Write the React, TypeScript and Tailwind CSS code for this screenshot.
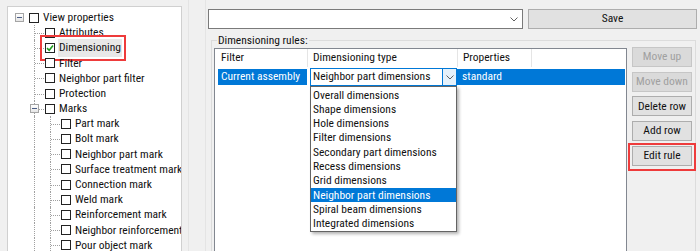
import React from 'react'

interface Node {
  label: string
  level: number
  exp?: boolean
  checked?: boolean
  marked?: boolean
}

const tree: Node[] = [
  { label: 'View properties', level: 0, exp: true },
  { label: 'Attributes', level: 1 },
  { label: 'Dimensioning', level: 1, checked: true, marked: true },
  { label: 'Filter', level: 1 },
  { label: 'Neighbor part filter', level: 1 },
  { label: 'Protection', level: 1 },
  { label: 'Marks', level: 1, exp: true },
  { label: 'Part mark', level: 2 },
  { label: 'Bolt mark', level: 2 },
  { label: 'Neighbor part mark', level: 2 },
  { label: 'Surface treatment mark', level: 2 },
  { label: 'Connection mark', level: 2 },
  { label: 'Weld mark', level: 2 },
  { label: 'Reinforcement mark', level: 2 },
  { label: 'Neighbor reinforcement mark', level: 2 },
  { label: 'Pour object mark', level: 2 },
]

const dimTypes = [
  'Overall dimensions',
  'Shape dimensions',
  'Hole dimensions',
  'Filter dimensions',
  'Secondary part dimensions',
  'Recess dimensions',
  'Grid dimensions',
  'Neighbor part dimensions',
  'Spiral beam dimensions',
  'Integrated dimensions',
]

function Expander() {
  return (
    <span className="w-[9px] h-[9px] border border-[#a5a5a5] bg-gradient-to-b from-white to-[#e6e6e6] flex items-center justify-center">
      <span className="w-[5px] h-[1px] bg-[#4b5d85]" />
    </span>
  )
}

function Check({ checked }: { checked?: boolean }) {
  return (
    <span className="w-[10px] h-[10px] shrink-0 border border-[#222] bg-white flex items-center justify-center">
      {checked && (
        <svg width="8" height="8" viewBox="0 0 8 8">
          <path d="M1 4.2 L3.2 6.3 L7 1.6" fill="none" stroke="#1e9e1e" strokeWidth="1.6" />
        </svg>
      )}
    </span>
  )
}

function Chevron() {
  return (
    <svg width="8" height="5" viewBox="0 0 8 5">
      <path d="M0.5 0.5 L4 4 L7.5 0.5" fill="none" stroke="#606060" strokeWidth="1" />
    </svg>
  )
}

function TreeRow({ node }: { node: Node }) {
  return (
    <div className="flex items-center h-[15.2px] whitespace-nowrap">
      <span className="w-[21px] h-full shrink-0 flex items-center">
        {node.level === 0 && (
          <span className="ml-[7px]">
            <Expander />
          </span>
        )}
      </span>
      {node.level >= 2 && (
        <span className="w-[16px] h-full shrink-0 pl-[5px]">
          <span className="block h-full border-l border-dotted border-[#a0a0a0]" />
        </span>
      )}
      {node.level >= 1 && (
        <span className="relative w-[16px] h-full shrink-0">
          <span className="absolute left-[5px] top-0 bottom-0 border-l border-dotted border-[#a0a0a0]" />
          <span className="absolute left-[6px] right-[1px] top-1/2 border-t border-dotted border-[#a0a0a0]" />
          {node.exp && (
            <span className="absolute left-[1px] top-[3px]">
              <Expander />
            </span>
          )}
        </span>
      )}
      <span className="relative flex items-center">
        <Check checked={node.checked} />
        <span className={'ml-[3px] px-[1px] ' + (node.marked ? 'bg-[#e8e8e8]' : '')}>{node.label}</span>
        {node.marked && (
          <span className="absolute -left-[5px] -right-[4px] -top-[4px] -bottom-[4px] border-2 border-[#ee3b3b]" />
        )}
      </span>
    </div>
  )
}

function SideButton({ label, disabled, marked }: { label: string; disabled?: boolean; marked?: boolean }) {
  return (
    <div className="relative h-[20px]">
      <div
        className={
          'h-full border flex items-center justify-center whitespace-nowrap ' +
          (disabled ? 'bg-[#dadada] border-[#c6c6c6] text-[#a0a0a0]' : 'bg-[#e1e1e1] border-[#adadad] text-[#111]')
        }
      >
        {label}
      </div>
      {marked && <span className="absolute -left-[4px] -right-[4px] -top-[3px] -bottom-[5px] border-2 border-[#ee3b3b]" />}
    </div>
  )
}

export default function App() {
  return (
    <div className="w-[700px] h-[251px] overflow-hidden bg-[#f0f0f0] flex font-['Roboto_Condensed','Liberation_Sans_Narrow',sans-serif] text-[11.5px] text-[#111]">
      {/* Tree panel */}
      <div className="pl-[7px] pt-[6px] shrink-0">
        <div className="w-[175px] h-[260px] bg-white border border-[#d0d0d0] pt-[3px] overflow-hidden">
          {tree.map(n => (
            <TreeRow key={n.label} node={n} />
          ))}
        </div>
      </div>

      {/* Splitter */}
      <div className="ml-[6px] w-[18px] h-full shrink-0 border-x border-[#e4e4e4]" />

      {/* Right side */}
      <div className="flex-1 ml-[2px] pt-[9px]">
        <div className="flex gap-[5px] h-[20px] mr-[3px]">
          <div className="w-[315px] bg-white border border-[#7a7a7a] flex items-center justify-end pr-[4px]">
            <Chevron />
          </div>
          <div className="flex-1 bg-[#e1e1e1] border border-[#adadad] flex items-center justify-center">Save</div>
        </div>

        <fieldset className="mt-[3px] ml-[3px] mr-[4px] h-[240px] border border-[#dcdcdc] pl-[2px]">
          <legend className="ml-[3px] px-[1px] leading-[16px]">Dimensioning rules:</legend>
          <div className="flex gap-[5px]">
            <div className="relative w-[413px] h-[220px] bg-white border border-[#828790] shrink-0">
              <div className="flex h-[18px] items-stretch">
                <div className="w-[93px] pl-[6px] border-r border-[#e5e5e5] flex items-center">Filter</div>
                <div className="w-[150px] pl-[5px] border-r border-[#e5e5e5] flex items-center">Dimensioning type</div>
                <div className="w-[74px] pl-[5px] border-r border-[#e5e5e5] flex items-center">Properties</div>
                <div className="flex-1" />
              </div>
              <div className="flex h-[18px] mt-[1px]">
                <div className="w-[95px] pl-[3px] pr-[3px] py-[1px]">
                  <div className="h-full bg-[#0078d7] text-white pl-[3px] flex items-center whitespace-nowrap overflow-hidden">Current assembly</div>
                </div>
                <div className="w-[147px] border border-[#0078d7] flex bg-white">
                  <div className="flex-1 pl-[2px] flex items-center whitespace-nowrap overflow-hidden">Neighbor part dimensions</div>
                  <div className="w-[14px] border-l border-[#0078d7] bg-[#e5f1fb] flex items-center justify-center">
                    <Chevron />
                  </div>
                </div>
                <div className="flex-1 py-[1px] pr-[1px]">
                  <div className="h-full bg-[#0078d7] text-white pl-[5px] flex items-center">standard</div>
                </div>
              </div>

              {/* open dropdown list */}
              <div className="absolute left-[95px] top-[37px] w-[147px] pt-[1px] bg-white border border-[#646464] shadow-[2px_2px_3px_rgba(0,0,0,0.3)]">
                {dimTypes.map(t => (
                  <div
                    key={t}
                    className={
                      'h-[14.3px] pl-[2px] flex items-center whitespace-nowrap ' +
                      (t === 'Neighbor part dimensions' ? 'bg-[#0078d7] text-white' : '')
                    }
                  >
                    {t}
                  </div>
                ))}
              </div>
            </div>

            <div className="w-[60px] -mt-[1px] flex flex-col gap-[4.7px]">
              <SideButton label="Move up" disabled />
              <SideButton label="Move down" disabled />
              <SideButton label="Delete row" />
              <SideButton label="Add row" />
              <SideButton label="Edit rule" marked />
            </div>
          </div>
        </fieldset>
      </div>
    </div>
  )
}
